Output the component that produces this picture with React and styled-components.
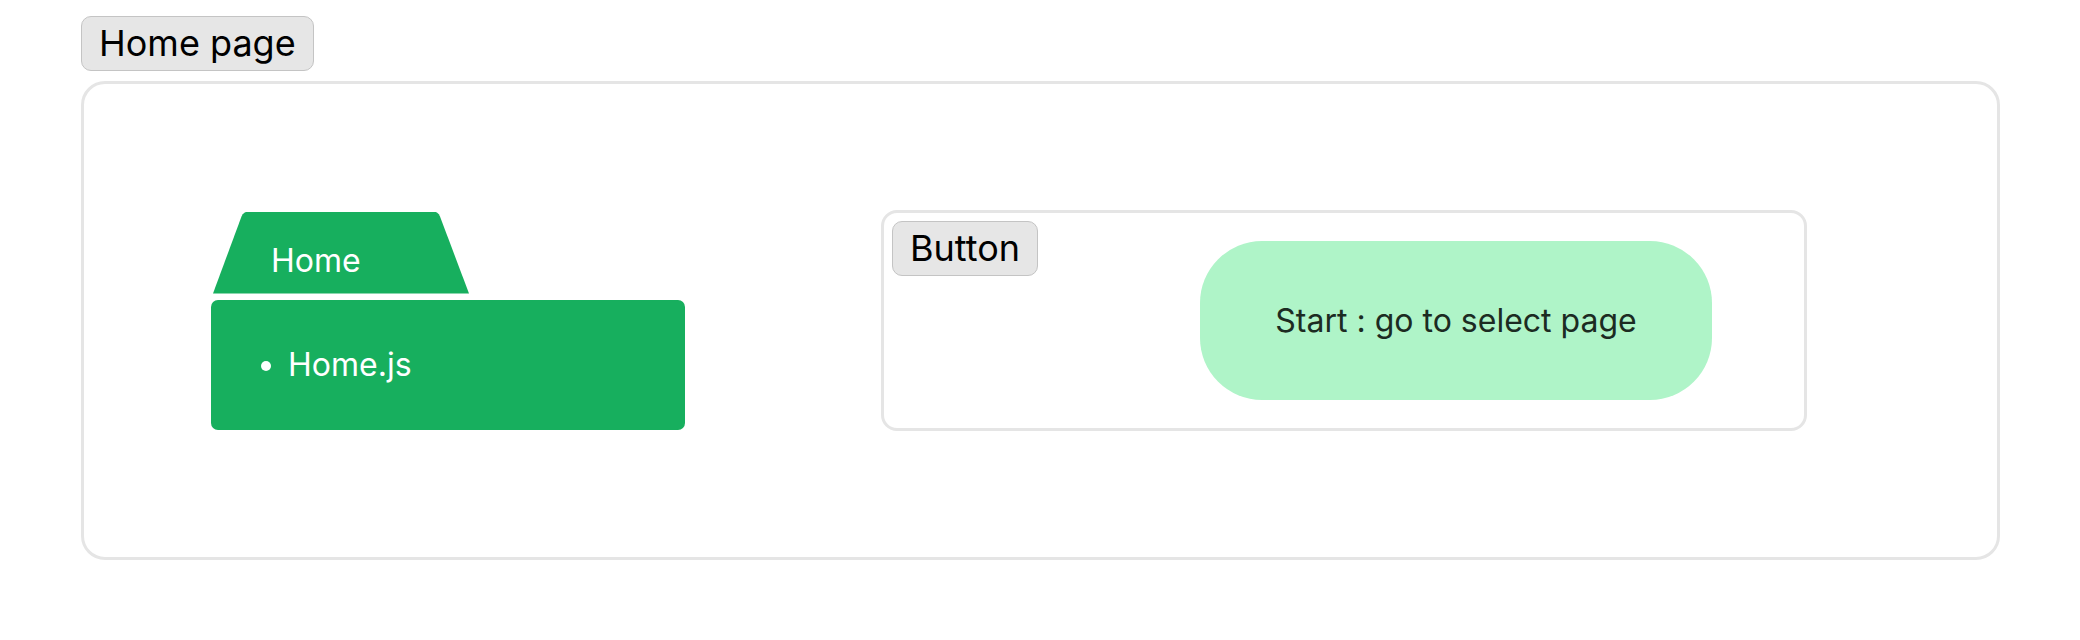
import React from "react";
import styled, { createGlobalStyle } from "styled-components";

const GlobalStyle = createGlobalStyle`
  html, body {
    margin: 0;
    padding: 0;
    background: #ffffff;
    font-family: Inter, "Noto Sans", "Liberation Sans", sans-serif;
  }
  * { box-sizing: border-box; }
`;

const Page = styled.div`
  padding: 16px 80px 0 81px;
  display: flex;
  flex-direction: column;
  align-items: flex-start;
  gap: 10px;
`;

const Label = styled.div`
  display: inline-flex;
  align-items: center;
  height: 55px;
  padding: 0 17px;
  font-size: 36px;
  line-height: 43px;
  color: #000;
  background: #e6e6e6;
  border: 1px solid #c4c4c4;
  border-radius: 10px;
  white-space: nowrap;
`;

const Frame = styled.div`
  align-self: stretch;
  height: 479px;
  border: 3px solid #e5e5e5;
  border-radius: 24px;
  display: flex;
  align-items: center;
  padding-left: 127px;
  gap: 196px;
`;

const Folder = styled.div`
  display: flex;
  flex-direction: column;
  gap: 6px;
  width: 474px;
`;

const Tab = styled.div`
  position: relative;
  margin-left: 2px;
  width: 256px;
  height: 82px;
  padding: 29px 0 0 58px;
  font-size: 32px;
  line-height: 39px;
  color: #fff;
  background: #17af5e;
  clip-path: path("M0 82 L28.5 5 Q30.5 0 36 0 L220 0 Q225 0 227 5 L256 82 Z");
`;

const FolderBody = styled.div`
  height: 130px;
  background: #17af5e;
  border-radius: 7px;
  display: flex;
  align-items: center;
  color: #fff;
`;

const FileList = styled.ul`
  margin: 0;
  padding-left: 77px;
  font-size: 32px;
  line-height: 39px;
`;

const Widget = styled.div`
  border: 3px solid #e5e5e5;
  border-radius: 16px;
  padding: 8px;
  display: flex;
  align-items: flex-start;
  width: 926px;
`;

const StartButton = styled.div`
  margin: 20px 84px 20px auto;
  width: 512px;
  height: 159px;
  border-radius: 62px;
  background: #aff4c8;
  color: #1c2b22;
  font-size: 32px;
  display: flex;
  align-items: center;
  justify-content: center;
`;

export default function App() {
  return (
    <>
      <GlobalStyle />
      <Page>
        <Label>Home page</Label>
        <Frame>
          <Folder>
            <Tab>Home</Tab>
            <FolderBody>
              <FileList>
                <li>Home.js</li>
              </FileList>
            </FolderBody>
          </Folder>
          <Widget>
            <Label>Button</Label>
            <StartButton>Start : go to select page</StartButton>
          </Widget>
        </Frame>
      </Page>
    </>
  );
}
